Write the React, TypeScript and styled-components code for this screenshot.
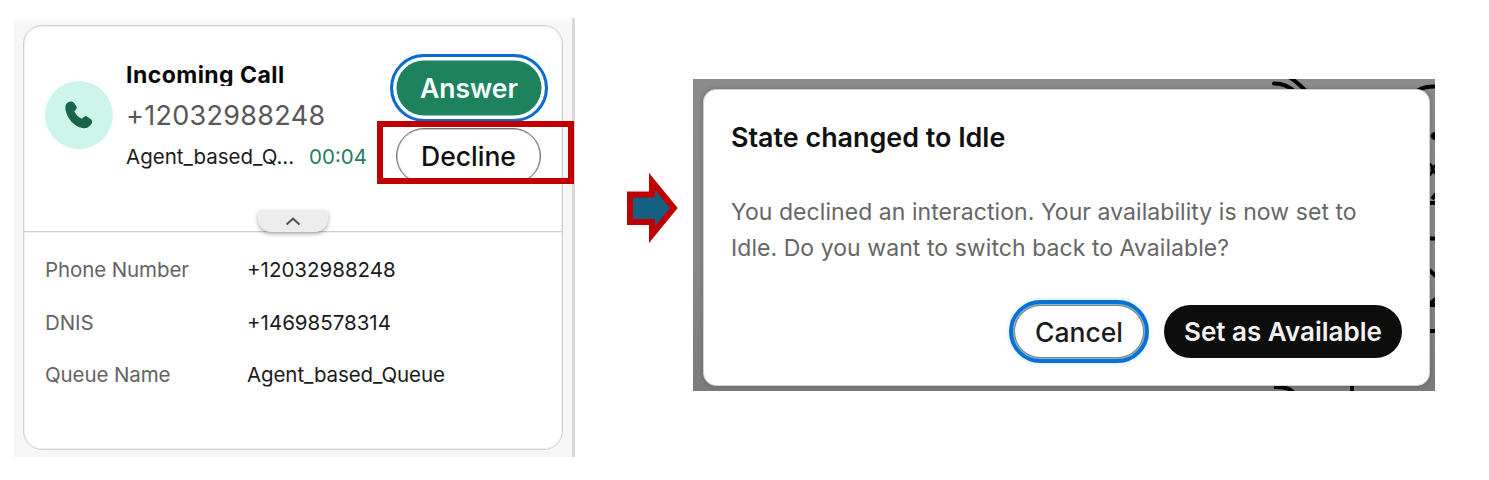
import React from "react";
import styled, { createGlobalStyle } from "styled-components";

const GlobalStyle = createGlobalStyle`
  *, *::before, *::after { box-sizing: border-box; }
  body { margin: 0; background: #fff; font-family: Inter, "Liberation Sans", sans-serif; }
  p, h2, h3, dl, dt, dd { margin: 0; }
`;

const Page = styled.main`
  display: flex;
  align-items: flex-start;
  width: 1489px;
  height: 480px;
  overflow: hidden;
  background: #fff;
`;

const CallPanel = styled.section`
  flex: none;
  width: 561px;
  height: 439px;
  margin: 18px 0 0 14px;
  padding: 7px 9px;
  background: linear-gradient(#fbfbfb, #f6f6f6 7px);
  border-right: 3px solid #d9d9d9;
`;

const CallCard = styled.article`
  width: 540px;
  height: 425px;
  background: #fff;
  border: 1px solid #cdd3d2;
  border-radius: 19px;
  box-shadow: inset 0 0 0 1px #eff1f1;
`;

const CallHeader = styled.header`
  position: relative;
  display: flex;
  height: 206px;
  padding-left: 21px;
  border-bottom: 1px solid #c9cfce;
  box-shadow: 0 1px 0 #eef0f0;
`;

const Avatar = styled.div`
  display: flex;
  flex: none;
  align-items: center;
  justify-content: center;
  width: 68px;
  height: 68px;
  margin-top: 55px;
  border-radius: 50%;
  background: #cef5eb;
`;

const CallInfo = styled.div`
  width: 244px;
  margin-left: 13px;
  padding-top: 35px;
`;

const CallTitle = styled.h2`
  height: 25px;
  overflow: hidden;
  font-size: 23px;
  font-weight: 700;
  line-height: 28px;
  letter-spacing: 0.45px;
  color: #080808;
  white-space: nowrap;
`;

const Caller = styled.p`
  margin-top: 12px;
  font-size: 27px;
  line-height: 36px;
  letter-spacing: 0.3px;
  color: #585858;
`;

const QueueLine = styled.p`
  display: flex;
  justify-content: space-between;
  width: 241px;
  margin-top: 10px;
  font-size: 20.5px;
  line-height: 26px;
  color: #1b1b1b;
`;

const Timer = styled.span`
  color: #267c63;
`;

const Actions = styled.div`
  display: flex;
  flex-direction: column;
  align-items: center;
  margin: 28px 0 0 20px;
`;

const PillButton = styled.button`
  padding: 0;
  border: 0;
  border-radius: 40px;
  font-family: inherit;
  font-size: 26.5px;
  cursor: pointer;
  white-space: nowrap;
`;

const AnswerButton = styled(PillButton)`
  width: 158px;
  height: 68px;
  background: #1f825f;
  background-clip: padding-box;
  border: 3px solid #0a6bd3;
  box-shadow: inset 0 0 0 3.5px #fff;
  color: #f5fffb;
  font-weight: 600;
`;

const DeclineClip = styled.div`
  height: 54px;
  margin: 6px 1px 0 0;
  overflow: hidden;
`;

const DeclineButton = styled(PillButton)`
  display: block;
  width: 145px;
  height: 56px;
  background: #fff;
  border: 1px solid #6c6c6c;
  box-shadow: inset 0 0 0 0.5px #9a9a9a;
  color: #111;
  font-weight: 500;
`;

const Highlight = styled.div`
  position: absolute;
  left: 353px;
  top: 95px;
  width: 197px;
  height: 63px;
  border: 6px solid #c00000;
`;

const CollapseHandle = styled.button`
  position: absolute;
  left: 234px;
  bottom: -1px;
  display: flex;
  align-items: center;
  justify-content: center;
  width: 70px;
  height: 22px;
  padding: 0;
  border: 0;
  border-radius: 3px 3px 13px 13px;
  background: #ececec;
  box-shadow: 0 2px 4px rgba(0, 0, 0, 0.32);
`;

const Details = styled.dl`
  display: grid;
  grid-template-columns: 202px 1fr;
  grid-auto-rows: 52.8px;
  align-items: center;
  padding: 11px 0 0 21px;
  font-size: 20.5px;
`;

const Term = styled.dt`
  letter-spacing: -0.1px;
  color: #646464;
`;

const Value = styled.dd`
  letter-spacing: ${(p: { $tight?: boolean }) => (p.$tight ? "-0.1px" : "0")};
  color: #1b1b1b;
`;

const Arrow = styled.svg`
  flex: none;
  width: 52px;
  height: 71px;
  margin: 173px 0 0 52px;
`;

const Backdrop = styled.section`
  position: relative;
  flex: none;
  width: 742px;
  height: 312px;
  margin: 79px 0 0 14px;
  padding: 10px 5px 5px 10px;
  background: linear-gradient(#8b8b8b, #878787 60%, #7c7c7c);
`;

const Doodle = styled.svg`
  position: absolute;
  inset: 0;
  width: 742px;
  height: 312px;
`;

const Dialog = styled.div`
  position: relative;
  width: 727px;
  height: 297px;
  padding: 31px 27px 0;
  border: 1px solid #d2d2d2;
  border-radius: 13px;
  background: #fff;
  box-shadow: 0 0 5px rgba(0, 0, 0, 0.22);
`;

const DialogTitle = styled.h3`
  font-size: 26.9px;
  font-weight: 600;
  line-height: 32px;
  color: #111;
`;

const DialogText = styled.p`
  margin-top: 41px;
  font-size: 23px;
  line-height: 36px;
  letter-spacing: 0.06px;
  color: #666;
  white-space: nowrap;
`;

const DialogActions = styled.div`
  display: flex;
  align-items: center;
  justify-content: flex-end;
  gap: 15px;
  margin-top: 34px;
`;

const CancelButton = styled(PillButton)`
  width: 140px;
  height: 63px;
  background: #fff;
  border: 4px solid #0a6fd6;
  box-shadow: inset 0 0 0 1px #79bdd9, inset 0 0 0 2px #85817e, 0 0 5px rgba(70, 190, 240, 0.35);
  color: #1c1c1c;
  font-weight: 500;
`;

const AvailableButton = styled(PillButton)`
  width: 238px;
  height: 53px;
  background: #0d0d0d;
  color: #f2f2f2;
  font-size: 26px;
  font-weight: 600;
`;

const details = [
  ["Phone Number", "+12032988248"],
  ["DNIS", "+14698578314"],
  ["Queue Name", "Agent_based_Queue"],
];

export default function App() {
  return (
    <>
      <GlobalStyle />
      <Page>
        <CallPanel>
          <CallCard>
            <CallHeader>
              <Avatar>
                <svg width="28" height="28" viewBox="0 0 28 28" fill="#19654a">
                  <path d="M2.800 1.500C5-.2 8 .2 9.400 2.300l1.900 2.900c.8 1.300.5 2.700-.6 3.700l-1.500 1.400c1.500 3.200 4.300 6 7.700 7.500l1.600-1.500c1-1 2.500-1.300 3.800-.5l3.200 2.100c1.900 1.300 2.200 3.900.6 5.500l-1.600 1.700c-1.800 1.900-4.300 2.500-6.900 2C8.700 25 2.400 18 .5 8.700.1 5.600.4 3.300 2.800 1.500z" />
                </svg>
              </Avatar>
              <CallInfo>
                <CallTitle>Incoming Call</CallTitle>
                <Caller>+12032988248</Caller>
                <QueueLine>
                  <span>Agent_based_Q...</span>
                  <Timer>00:04</Timer>
                </QueueLine>
              </CallInfo>
              <Actions>
                <AnswerButton>Answer</AnswerButton>
                <DeclineClip>
                  <DeclineButton>Decline</DeclineButton>
                </DeclineClip>
              </Actions>
              <Highlight />
              <CollapseHandle aria-label="Collapse">
                <svg width="16" height="9" viewBox="0 0 16 9" fill="none" stroke="#555" strokeWidth="2">
                  <path d="M1.500 7.500 8 1.700l6.500 5.800" />
                </svg>
              </CollapseHandle>
            </CallHeader>
            <Details>
              {details.map(([term, value]) => (
                <React.Fragment key={term}>
                  <Term>{term}</Term>
                  <Value $tight={!value.startsWith("+")}>{value}</Value>
                </React.Fragment>
              ))}
            </Details>
          </CallCard>
        </CallPanel>

        <Arrow viewBox="0 0 52 71">
          <path d="M3 21.500H25V8.300L46.800 35 25 61.700V49H3z" fill="#156082" stroke="#c00000" strokeWidth="6" strokeMiterlimit="10" />
        </Arrow>

        <Backdrop>
          <Doodle viewBox="0 0 742 312" fill="none" stroke="#050505" strokeWidth="4">
            <path d="M581 4.500C590 4.500 596 7 602 13" strokeLinecap="round" />
            <path d="M596-2C603 2 607 6 613 12" />
            <path d="M724 12C730 8 735 7.500 744 7.500" />
            <path d="M744 54C738 56 738 58 744 60" />
            <path d="M735 84C741 88 742 92 735 97M744 85 739 90 744 96" strokeWidth="3" />
            <path d="M744 114 739 120M736 124H744" />
            <path d="M735 159.500H744M735 190 744 198M744 219 735 226H744M735 252H744" />
            <path d="M581 308C592 308 597 309 602 315M659 305V313" />
          </Doodle>
          <Dialog>
            <DialogTitle>State changed to Idle</DialogTitle>
            <DialogText>
              You declined an interaction. Your availability is now set to
              <br />
              Idle. Do you want to switch back to Available?
            </DialogText>
            <DialogActions>
              <CancelButton>Cancel</CancelButton>
              <AvailableButton>Set as Available</AvailableButton>
            </DialogActions>
          </Dialog>
        </Backdrop>
      </Page>
    </>
  );
}
